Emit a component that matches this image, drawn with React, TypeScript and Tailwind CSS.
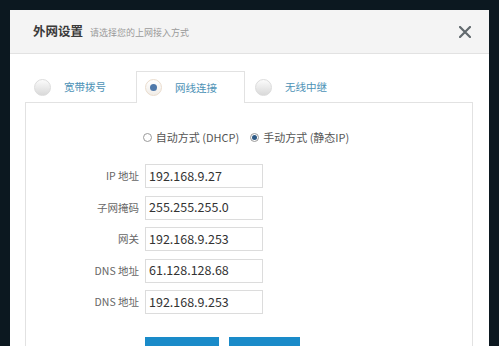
const font = "font-['Microsoft_YaHei','Noto_Sans_CJK_SC',sans-serif]";

type Tab = { label: string; active?: boolean };

const tabs: Tab[] = [
  { label: "宽带拨号" },
  { label: "网线连接", active: true },
  { label: "无线中继" },
];

const fields = [
  { label: "IP 地址", value: "192.168.9.27" },
  { label: "子网掩码", value: "255.255.255.0" },
  { label: "网关", value: "192.168.9.253" },
  { label: "DNS 地址", value: "61.128.128.68" },
  { label: "DNS 地址", value: "192.168.9.253" },
];

function TabRadio({ active }: { active?: boolean }) {
  if (active) {
    return (
      <span className="flex h-[17px] w-[17px] items-center justify-center rounded-full border border-[#eadccd] bg-gradient-to-b from-[#ffffff] to-[#f1ede8]">
        <span className="h-[7px] w-[7px] rounded-full bg-[#4f79ab]" />
      </span>
    );
  }
  return (
    <span className="h-[17px] w-[17px] rounded-full border border-[#dcdcdc] bg-gradient-to-b from-[#fbfbfb] to-[#d9d9d9]" />
  );
}

function SmallRadio({ checked }: { checked?: boolean }) {
  return (
    <span className="flex h-[9px] w-[9px] items-center justify-center rounded-full border border-[#9a9a9a] bg-white">
      {checked && <span className="h-[5px] w-[5px] rounded-full bg-[#2d5a86]" />}
    </span>
  );
}

export default function App() {
  return (
    <div className={`h-[346px] w-[499px] overflow-hidden bg-[#0c1820] pl-[10px] pt-[10px] ${font}`}>
      <div className="h-[336px] w-[479px] overflow-hidden bg-white">
        <div className="flex h-[44px] items-center border-b border-[#e2e2e2] bg-[#f4f4f4] pl-[23px] pr-[18px]">
          <span className="text-[12.5px] font-semibold text-[#3a3a3a]">外网设置</span>
          <span className="ml-[7px] mt-[2px] text-[9px] text-[#9a9a9a]">请选择您的上网接入方式</span>
          <svg className="ml-auto" width="12" height="12" viewBox="0 0 12 12">
            <path d="M1 1 L11 11 M11 1 L1 11" stroke="#626a6e" strokeWidth="2.2" strokeLinecap="round" />
          </svg>
        </div>

        <div className="px-[15px] pt-[17px]">
          <div className="flex h-[31px]">
            {tabs.map((tab, i) => (
              <div
                key={tab.label}
                className={`relative -mb-px flex items-center gap-[13px] ${
                  i === 0 ? "w-[111px] pl-[8px]" : i === 1 ? "w-[109px] pl-[8px]" : "w-[110px] pl-[9px]"
                } ${
                  tab.active
                    ? "border border-b-0 border-[#e2e2e2] bg-white"
                    : "border border-transparent"
                }`}
              >
                <TabRadio active={tab.active} />
                <span className="text-[10.5px] text-[#4d92b6]">{tab.label}</span>
              </div>
            ))}
          </div>

          <div className="h-[260px] w-[448px] border border-[#e2e2e2] bg-white pt-[26px]">
            <div className="flex h-[16px] items-center justify-center gap-[4px] pr-[6px] text-[11px] text-[#555]">
              <SmallRadio />
              <span>自动方式 (DHCP)</span>
              <span className="ml-[3px]" />
              <SmallRadio checked />
              <span>手动方式 (静态IP)</span>
            </div>

            <div className="mt-[19px] flex flex-col gap-[7.5px]">
              {fields.map((f, i) => (
                <div key={i} className="flex items-center">
                  <span className="w-[113px] text-right text-[10.5px] text-[#666]">{f.label}</span>
                  <div className="ml-[6px] flex h-[24px] w-[118px] items-center border border-[#dcdcdc] bg-white pl-[3px] text-[12.5px] text-[#333]">
                    {f.value}
                  </div>
                </div>
              ))}
            </div>

            {/* button labels sit below the visible area */}
            <div className="ml-[119px] mt-[23px] flex gap-[10px]">
              <button className="h-[32px] w-[74px] bg-[#1a8bc9]" aria-label="保存" />
              <button className="h-[32px] w-[71px] bg-[#1a8bc9]" aria-label="取消" />
            </div>
          </div>
        </div>
      </div>
    </div>
  );
}
